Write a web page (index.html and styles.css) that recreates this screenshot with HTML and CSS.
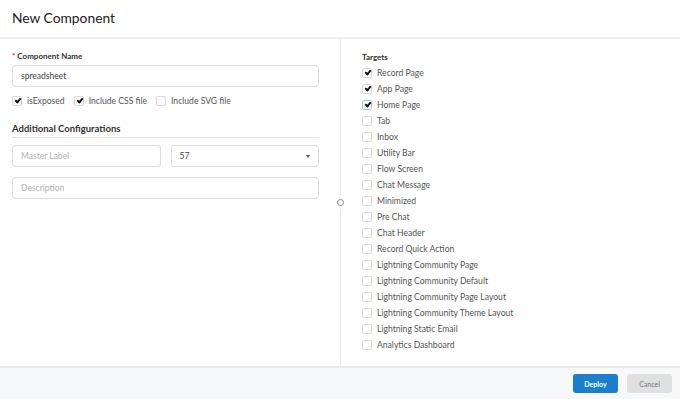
FILE: index.html
```html
<!DOCTYPE html>
<html lang="en">
<head>
  <meta charset="UTF-8" />
  <title>New Component</title>
  <link rel="stylesheet" href="styles.css">
</head>
<body>

  <header class="modal-header">
    <h1>New Component</h1>
  </header>

  <div class="modal-body">
    <div class="left-col">
      <label class="field-label"><span class="req">*</span> Component Name</label>
      <div class="input">spreadsheet</div>

      <div class="check-row">
        <span class="check"><span class="box checked"></span>isExposed</span>
        <span class="check"><span class="box checked"></span>Include CSS file</span>
        <span class="check"><span class="box"></span>Include SVG file</span>
      </div>

      <h2 class="section-title">Additional Configurations</h2>

      <div class="two-col">
        <div class="input placeholder">Master Label</div>
        <div class="input select">57 <span class="caret"></span></div>
      </div>
      <div class="input placeholder">Description</div>
    </div>

    <div class="divider">
      <div class="line"></div>
      <div class="handle"></div>
      <div class="line"></div>
    </div>

    <div class="right-col">
      <div class="field-label">Targets</div>
      <ul class="targets">
        <li><span class="box checked"></span>Record Page</li>
        <li><span class="box checked"></span>App Page</li>
        <li><span class="box checked focus"></span>Home Page</li>
        <li><span class="box"></span>Tab</li>
        <li><span class="box"></span>Inbox</li>
        <li><span class="box"></span>Utility Bar</li>
        <li><span class="box"></span>Flow Screen</li>
        <li><span class="box"></span>Chat Message</li>
        <li><span class="box"></span>Minimized</li>
        <li><span class="box"></span>Pre Chat</li>
        <li><span class="box"></span>Chat Header</li>
        <li><span class="box"></span>Record Quick Action</li>
        <li><span class="box"></span>Lightning Community Page</li>
        <li><span class="box"></span>Lightning Community Default</li>
        <li><span class="box"></span>Lightning Community Page Layout</li>
        <li><span class="box"></span>Lightning Community Theme Layout</li>
        <li><span class="box"></span>Lightning Static Email</li>
        <li><span class="box"></span>Analytics Dashboard</li>
      </ul>
    </div>
  </div>

  <footer class="modal-footer">
    <button class="btn primary">Deploy</button>
    <button class="btn">Cancel</button>
  </footer>

</body>
</html>
```

FILE: styles.css
```css
body {
  font-family: Lato, "Open Sans", sans-serif;
  color: #333;
  background: #fff;
  margin: 0;
  padding: 0;
  height: 399px;
  display: flex;
  flex-direction: column;
  overflow: hidden;
}

.modal-header {
  border-bottom: 2px solid #eeeeee;
  display: flex;
  align-items: center;
  padding-left: 12px;
  box-sizing: border-box;
  height: 39px;
}

.modal-header h1 {
  margin: 0;
  font-size: 13.8px;
  font-weight: 400;
  color: #222;
  position: relative;
  top: -1px;
}

.modal-body {
  flex: 1;
  display: flex;
}

.left-col {
  width: 307px;
  padding: 12px 0 0 12px;
  margin-right: 17px;
}

.field-label {
  display: block;
  font-size: 8px;
  font-weight: 700;
  color: #333;
  line-height: 10px;
}

.req {
  color: #c23934;
}

.input {
  height: 22px;
  box-sizing: border-box;
  border: 1px solid #dddddd;
  border-radius: 3px;
  margin-top: 4px;
  padding-left: 8px;
  font-size: 8.5px;
  line-height: 20px;
  color: #444;
}

.input.placeholder {
  color: #b0b0b0;
}

.check-row {
  display: flex;
  gap: 9px;
  margin-top: 8px;
  height: 12px;
  align-items: center;
}

.check,
.targets li {
  display: flex;
  align-items: center;
  font-size: 8.6px;
  color: #555;
}

.box {
  width: 10px;
  height: 10px;
  box-sizing: border-box;
  border: 1px solid #d8d8d8;
  border-radius: 2px;
  margin-right: 5px;
  position: relative;
  flex-shrink: 0;
}

.box.checked::after {
  content: "";
  position: absolute;
  left: 2px;
  top: 1px;
  width: 4px;
  height: 2px;
  border-left: 2px solid #111;
  border-bottom: 2px solid #111;
  transform: rotate(-48deg);
}

.box.focus {
  border-color: #a9c6e8;
}

.section-title {
  margin: 16px 0 0;
  font-size: 9.5px;
  font-weight: 700;
  color: #333;
  line-height: 12px;
  padding-bottom: 2px;
  border-bottom: 1px solid #e6e6e6;
}

.two-col {
  display: grid;
  grid-template-columns: 1fr 1fr;
  gap: 10px;
  margin-top: 3px;
}

.two-col + .input {
  margin-top: 10px;
}

.select {
  display: flex;
  justify-content: space-between;
  padding-right: 8px;
  color: #444;
}

.caret {
  width: 0;
  height: 0;
  margin-top: 9px;
  border-left: 2.5px solid transparent;
  border-right: 2.5px solid transparent;
  border-top: 3px solid #555;
}

.divider {
  width: 9px;
  display: flex;
  flex-direction: column;
  align-items: center;
}

.divider .line {
  flex: 1;
  width: 1px;
  background: #e8e8e8;
}

.handle {
  width: 7px;
  height: 7px;
  border: 1px solid #888;
  border-radius: 50%;
  margin: 3px 0;
  box-sizing: border-box;
}

.right-col {
  padding: 13px 0 0 17px;
}

.targets {
  list-style: none;
  margin: 3px 0 0;
  padding: 0;
}

.targets li {
  height: 16px;
}

.modal-footer {
  height: 33px;
  box-sizing: border-box;
  border-top: 2px solid #eaeaea;
  background: #f7f8fa;
  display: flex;
  justify-content: flex-end;
  align-items: center;
  gap: 9px;
  padding-right: 8px;
}

.btn {
  width: 45px;
  height: 19px;
  border: none;
  border-radius: 3px;
  background: #e0e0e0;
  color: #777;
  font-family: Lato, sans-serif;
  font-size: 7px;
  padding: 0;
}

.btn.primary {
  background: #1b7fd0;
  color: #fff;
  font-weight: 700;
}
```
